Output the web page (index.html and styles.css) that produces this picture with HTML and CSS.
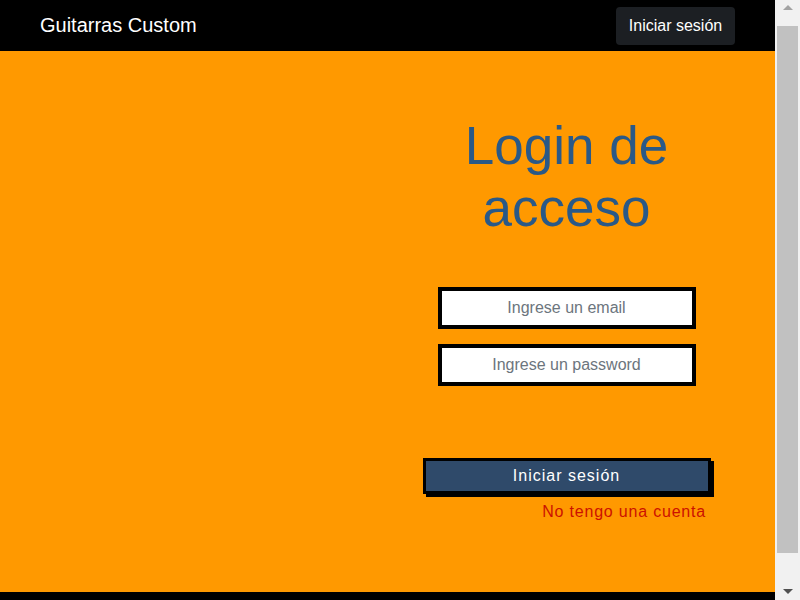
FILE: index.html
```html
<!DOCTYPE html>
<html lang="es">
<head>
<meta charset="utf-8">
<title>Guitarras Custom</title>
<link rel="stylesheet" href="styles.css">
</head>
<body>
<div class="page">
  <nav class="navbar">
    <a class="brand" href="#">Guitarras Custom</a>
    <button class="nav-btn">Iniciar sesión</button>
  </nav>
  <main class="main">
    <div class="left"></div>
    <section class="login">
      <h1 class="title">Login de acceso</h1>
      <form class="form">
        <input class="field" type="email" placeholder="Ingrese un email">
        <input class="field" type="password" placeholder="Ingrese un password">
        <button class="submit" type="button">Iniciar sesión</button>
        <a class="register" href="#">No tengo una cuenta</a>
      </form>
    </section>
  </main>
  <footer class="footer"></footer>
</div>
<div class="scrollbar" aria-hidden="true">
  <div class="sb-btn">
    <svg width="25" height="17" viewBox="0 0 25 17"><path d="M8 10 L13 5 L18 10 Z" fill="#a3a3a3"/></svg>
  </div>
  <div class="sb-track"><div class="sb-thumb"></div></div>
  <div class="sb-btn">
    <svg width="25" height="17" viewBox="0 0 25 17"><path d="M8 6 L18 6 L13 11 Z" fill="#505050"/></svg>
  </div>
</div>
</body>
</html>
```
FILE: styles.css
```css
html, body {
  margin: 0;
  padding: 0;
}
body {
  font-family: "Liberation Sans", Arial, sans-serif;
  background: #ff9900;
}
.page {
  margin-right: 25px;
}
.navbar {
  background: #000;
  height: 51px;
  display: flex;
  align-items: center;
  justify-content: space-between;
  padding: 0 40px;
  box-sizing: border-box;
}
.brand {
  color: #fff;
  text-decoration: none;
  font-size: 20px;
}
.nav-btn {
  background: #1c1f23;
  color: #fff;
  border: none;
  border-radius: 4px;
  font-family: inherit;
  font-size: 16px;
  height: 38px;
  width: 119px;
}
.main {
  display: flex;
  height: 541px;
}
.left {
  flex: 1;
}
.login {
  width: 289px;
  margin-right: 64px;
  display: flex;
  flex-direction: column;
  align-items: center;
}
.title {
  margin: 64px 0 0;
  font-size: 53px;
  font-weight: normal;
  line-height: 62px;
  color: #2a5987;
  text-align: center;
}
.form {
  display: flex;
  flex-direction: column;
  align-items: center;
  width: 100%;
  margin-top: 48px;
}
.field {
  width: 258px;
  height: 42px;
  box-sizing: border-box;
  border: 4px solid #000;
  background: #fff;
  font-family: inherit;
  font-size: 16px;
  text-align: center;
  margin-bottom: 15px;
  outline: none;
}
.field::placeholder {
  color: #6c757d;
}
.submit {
  margin-top: 57px;
  width: 288px;
  height: 36px;
  box-sizing: border-box;
  border: 3px solid #000;
  box-shadow: 3px 3px 0 #000;
  background: #2f4a6a;
  color: #fff;
  font-family: inherit;
  font-size: 16px;
  letter-spacing: 1px;
}
.register {
  align-self: flex-end;
  margin-top: 9px;
  margin-right: 5px;
  color: #cc1100;
  text-decoration: none;
  font-size: 16px;
  letter-spacing: 0.8px;
}
.footer {
  background: #000;
  height: 55px;
}
.scrollbar {
  position: fixed;
  top: 0;
  right: 0;
  width: 25px;
  height: 100vh;
  background: #f1f1f1;
  display: flex;
  flex-direction: column;
}
.sb-btn {
  height: 17px;
  flex: none;
}
.sb-btn svg {
  display: block;
}
.sb-track {
  flex: 1;
  padding: 9px 2px 30px;
  display: flex;
}
.sb-thumb {
  flex: 1;
  background: #c1c1c1;
}
```
